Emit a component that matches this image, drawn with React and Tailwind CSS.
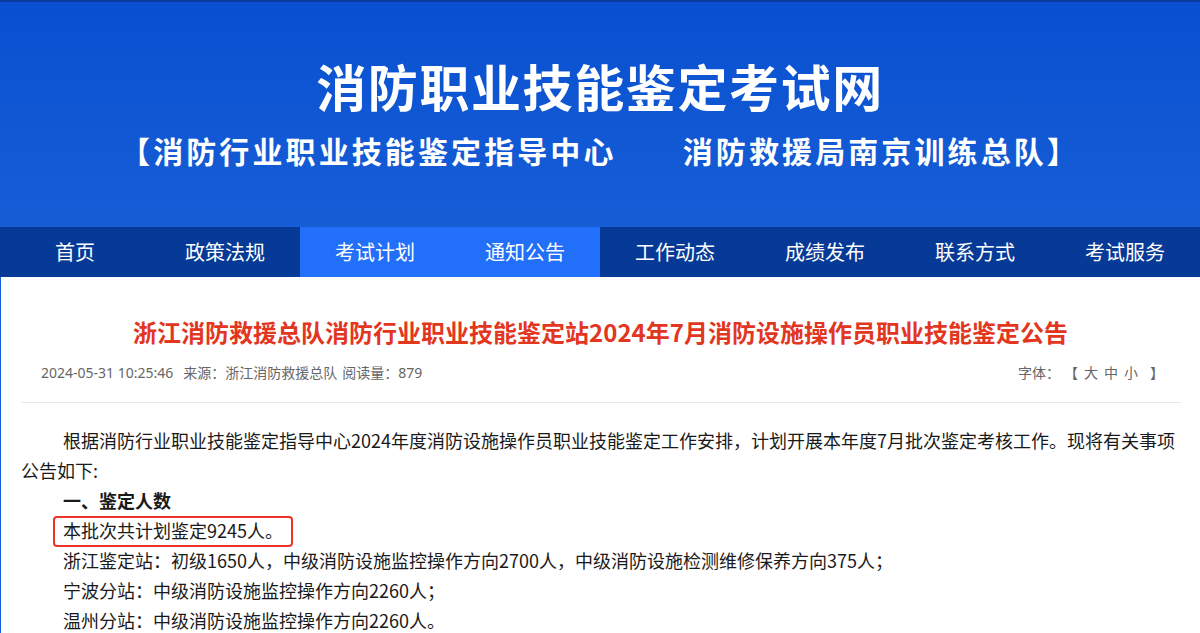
const navItems = ["首页", "政策法规", "考试计划", "通知公告", "工作动态", "成绩发布", "联系方式", "考试服务"];

export default function App() {
  return (
    <div className="w-[1200px] h-[633px] overflow-hidden bg-white font-['Noto_Sans_CJK_SC','Noto_Sans',sans-serif]">

      {/* HEADER */}
      <header className="h-[227px] border-t-2 border-[#0a3c9c] bg-gradient-to-b from-[#0850d1] to-[#175dd6] flex flex-col items-center text-white">
        <h1 className="mt-[54px] text-[50px] leading-[58px] font-bold tracking-[1.6px]">
          消防职业技能鉴定考试网
        </h1>
        <p className="mt-[16px] text-[30px] leading-[40px] font-bold tracking-[3.1px]">
          【消防行业职业技能鉴定指导中心　　消防救援局南京训练总队】
        </p>
      </header>

      {/* NAV */}
      <nav className="h-[50px] bg-[#063a96] flex">
        {navItems.map((item, i) => (
          <a
            key={item}
            className={
              i === 2 || i === 3
                ? "w-[150px] text-center text-[20px] leading-[50px] text-white bg-[#2270fa]"
                : "w-[150px] text-center text-[20px] leading-[50px] text-white"
            }
          >
            {item}
          </a>
        ))}
      </nav>

      {/* ARTICLE */}
      <main className="border-l border-[#1a5fd8] h-[356px]">
        <h2 className="pt-[39px] text-center text-[24px] leading-[32px] font-bold text-[#e2361f]">
          浙江消防救援总队消防行业职业技能鉴定站2024年7月消防设施操作员职业技能鉴定公告
        </h2>

        <div className="mt-[15px] flex justify-between pl-[40px] pr-[36px] text-[14px] leading-[20px] text-[#666] font-['Noto_Sans','Noto_Sans_CJK_SC',sans-serif]">
          <div>
            <span>2024-05-31 10:25:46</span>
            <span className="ml-[10px]">来源：浙江消防救援总队</span>
            <span className="ml-[5px]">阅读量：879</span>
          </div>
          <div className="flex">
            <span>字体：</span>
            <span className="ml-[4px]">【</span>
            <span className="ml-[6px]">大</span>
            <span className="ml-[6px]">中</span>
            <span className="ml-[6px]">小</span>
            <span className="ml-[12px]">】</span>
          </div>
        </div>

        <div className="mt-[19px] ml-[20px] mr-[19px] border-t border-[#e8e8e8]" />

        <div className="mt-[22px] px-[20px] text-[18px] leading-[30px] text-[#1a1a1a]">
          <p className="indent-[42px]">
            根据消防行业职业技能鉴定指导中心2024年度消防设施操作员职业技能鉴定工作安排，计划开展本年度7月批次鉴定考核工作。现将有关事项公告如下:
          </p>
          <p className="indent-[42px] font-bold">一、鉴定人数</p>
          <p className="pl-[42px]">
            <span className="relative inline-block">
              本批次共计划鉴定9245人。
              <span className="absolute -left-[10px] -right-[10px] top-[1px] -bottom-[2px] border-2 border-[#ee3328] rounded-[4px]" />
            </span>
          </p>
          <p className="indent-[42px]">
            浙江鉴定站：初级1650人，中级消防设施监控操作方向2700人，中级消防设施检测维修保养方向375人；
          </p>
          <p className="indent-[42px]">宁波分站：中级消防设施监控操作方向2260人；</p>
          <p className="indent-[42px]">温州分站：中级消防设施监控操作方向2260人。</p>
        </div>
      </main>

    </div>
  );
}
